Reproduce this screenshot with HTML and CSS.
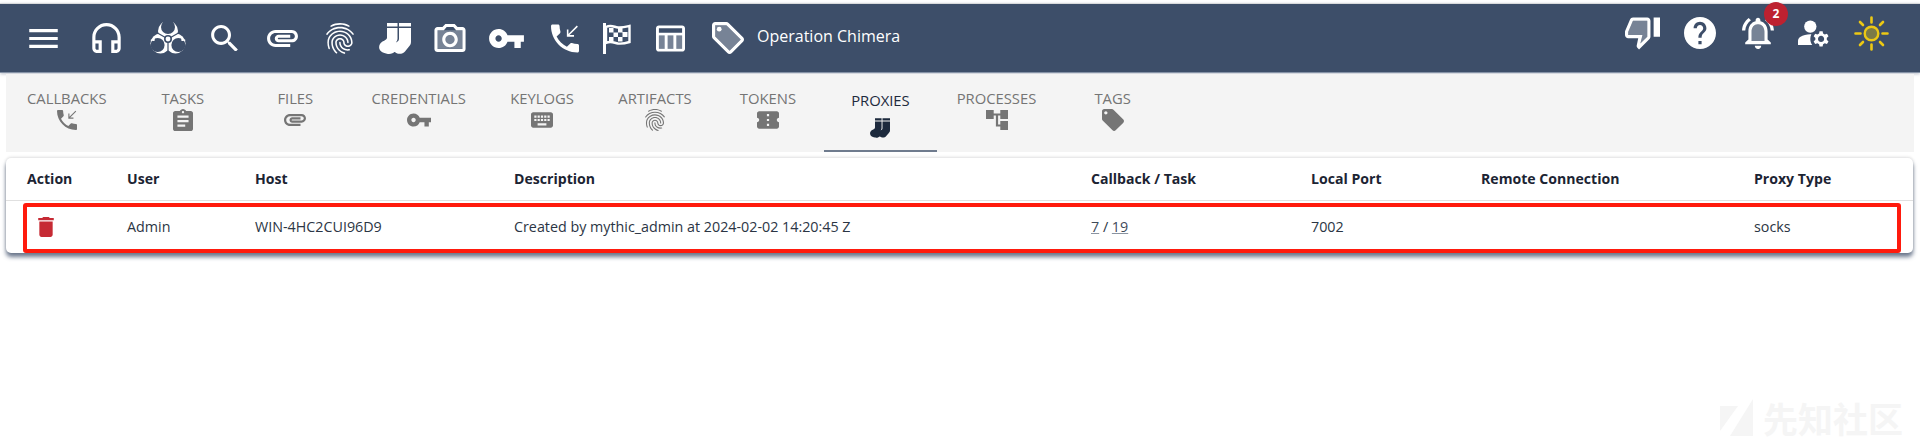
FILE: index.html
```html
<!DOCTYPE html>
<html lang="en">
<head>
<meta charset="utf-8">
<title>Operation Chimera - Proxies</title>
<link rel="stylesheet" href="styles.css">
</head>
<body>
<svg class="defs" width="0" height="0" aria-hidden="true">
  <defs>
    <symbol id="i-phone" viewBox="3 3 18 18"><path d="M20 15.5c-1.25 0-2.45-.2-3.57-.57-.35-.11-.74-.03-1.02.24l-2.2 2.2c-2.83-1.44-5.15-3.75-6.59-6.59l2.2-2.21c.28-.26.36-.65.25-1C8.7 6.45 8.5 5.25 8.5 4c0-.55-.45-1-1-1H4c-.55 0-1 .45-1 1 0 9.39 7.61 17 17 17 .55 0 1-.45 1-1v-3.5c0-.55-.45-1-1-1zM20.3 4.4l-.7-.7-5.4 5.4V6.2h-1v4.6h4.6v-1h-2.9z"/></symbol>
    <symbol id="i-clip" viewBox="2 7 20 11"><path d="M2 12.5C2 9.46 4.46 7 7.5 7H18c2.21 0 4 1.79 4 4s-1.79 4-4 4H9.5C8.12 15 7 13.88 7 12.5S8.12 10 9.5 10H17v2H9.41c-.55 0-.55 1 0 1H18c1.1 0 2-.9 2-2s-.9-2-2-2H7.5C5.57 9 4 10.57 4 12.5S5.57 16 7.5 16H17v2H7.5C4.46 18 2 15.54 2 12.5z"/></symbol>
    <symbol id="i-key" viewBox="1 6 22 12"><path d="M12.65 10C11.83 7.67 9.61 6 7 6c-3.31 0-6 2.69-6 6s2.69 6 6 6c2.61 0 4.83-1.67 5.65-4H17v4h4v-4h2v-4H12.65zM7 14c-1.1 0-2-.9-2-2s.9-2 2-2 2 .9 2 2-.9 2-2 2z"/></symbol>
    <symbol id="i-finger" viewBox="2.9 2 18.2 20"><path d="M17.81 4.47c-.08 0-.16-.02-.23-.06C15.66 3.42 14 3 12.01 3c-1.98 0-3.86.47-5.57 1.41-.24.13-.54.04-.68-.2-.13-.24-.04-.55.2-.68C7.82 2.52 9.86 2 12.01 2c2.13 0 3.99.47 6.03 1.52.25.13.34.43.21.67-.09.18-.26.28-.44.28zM3.5 9.72c-.1 0-.2-.03-.29-.09-.23-.16-.28-.47-.12-.7.99-1.4 2.25-2.5 3.75-3.27C9.98 4.04 14 4.03 17.15 5.65c1.5.77 2.76 1.86 3.75 3.25.16.22.11.54-.12.7-.23.16-.54.11-.7-.12-.9-1.26-2.04-2.25-3.39-2.94-2.87-1.47-6.54-1.47-9.4.01-1.36.7-2.5 1.7-3.4 2.96-.08.14-.23.21-.39.21zm6.25 12.07c-.13 0-.26-.05-.35-.15-.87-.87-1.34-1.43-2.01-2.64-.69-1.23-1.05-2.73-1.05-4.34 0-2.97 2.54-5.39 5.66-5.39s5.66 2.42 5.66 5.39c0 .28-.22.5-.5.5s-.5-.22-.5-.5c0-2.42-2.09-4.39-4.66-4.39-2.57 0-4.66 1.97-4.66 4.39 0 1.44.32 2.77.93 3.85.64 1.15 1.08 1.64 1.85 2.42.19.2.19.51 0 .71-.11.1-.24.15-.37.15zm7.17-1.85c-1.19 0-2.24-.3-3.1-.89-1.49-1.01-2.38-2.65-2.38-4.39 0-.28.22-.5.5-.5s.5.22.5.5c0 1.41.72 2.74 1.94 3.56.71.48 1.54.71 2.54.71.24 0 .64-.03 1.04-.1.27-.05.53.13.58.41.05.27-.13.53-.41.58-.57.11-1.07.12-1.21.12zM14.91 22c-.04 0-.09-.01-.13-.02-1.59-.44-2.63-1.03-3.72-2.1-1.4-1.39-2.17-3.24-2.17-5.22 0-1.62 1.38-2.94 3.08-2.94 1.7 0 3.08 1.32 3.08 2.94 0 1.07.93 1.94 2.08 1.94s2.08-.87 2.08-1.94c0-3.77-3.25-6.83-7.25-6.83-2.84 0-5.44 1.58-6.61 4.03-.39.81-.59 1.76-.59 2.8 0 .78.07 2.01.67 3.61.1.26-.03.55-.29.64-.26.1-.55-.04-.64-.29-.49-1.31-.73-2.61-.73-3.96 0-1.2.23-2.29.68-3.24 1.33-2.79 4.28-4.6 7.51-4.6 4.55 0 8.25 3.51 8.25 7.83 0 1.62-1.38 2.94-3.08 2.94s-3.08-1.32-3.08-2.94c0-1.07-.93-1.94-2.08-1.94s-2.08.87-2.08 1.94c0 1.71.66 3.31 1.87 4.51.95.94 1.86 1.46 3.27 1.85.27.07.42.35.35.61-.05.23-.26.38-.47.38z"/></symbol>
    <symbol id="i-socks" viewBox="0 0 32 31"><path d="M8 0h10.500v3.500H8zM20 0h12v3.500H20zM8 5h10.500v11c-.3 2-1.700 3.500-2.800 5.500-1.100 2.200-1.200 5 .3 7-1.700 1.800-4.800 3-8.100 2.200C3 30 .5 27.500.2 25c-.4-2.800 1-4.800 3-6.200 2-1.300 4.800-2 4.800-4.300zM20 5h12v14c0 2-1 3.500-2.200 4.800l-3.800 4.600c-1.800 2.200-5 3.100-7.800 2-2.800-1-4.500-3.600-4.100-6.400.3-2.500 2-4 4-5.200 1.400-.8 1.900-1.700 1.900-3.300z"/></symbol>
    <symbol id="i-tag" viewBox="2 2 20 20"><path d="M21.41 11.58l-9-9C12.05 2.220 11.550 2 11 2H4c-1.100 0-2 .9-2 2v7c0 .55.22 1.050.59 1.420l9 9c.36.36.86.58 1.41.58.55 0 1.050-.22 1.410-.59l7-7c.37-.36.59-.86.59-1.410 0-.55-.23-1.060-.59-1.420zM5.500 7C4.670 7 4 6.330 4 5.500S4.670 4 5.500 4 7 4.670 7 5.500 6.330 7 5.500 7z"/></symbol>
  </defs>
</svg>

<header class="appbar">
  <nav class="appbar-left">
    <svg class="ico" width="29" height="19" viewBox="3 6 18 12"><path d="M3 18h18v-2H3v2zm0-5h18v-2H3v2zm0-7v2h18V6H3z"/></svg>
    <svg class="ico" width="29" height="30" viewBox="3 1 18 19"><path d="M12 1c-4.970 0-9 4.030-9 9v7c0 1.660 1.340 3 3 3h3v-8H5v-2c0-3.870 3.130-7 7-7s7 3.130 7 7v2h-4v8h3c1.660 0 3-1.340 3-3v-7c0-4.970-4.030-9-9-9zM7 14v4H6c-.55 0-1-.45-1-1v-3h2zm12 3c0 .55-.45 1-1 1h-1v-4h2v3z"/></svg>
    <svg class="ico" width="36" height="32" viewBox="0 0 36 32">
      <mask id="bio-cut">
        <rect width="36" height="32" fill="#fff"/>
        <circle cx="18" cy="5" r="7" fill="#000"/>
        <circle cx="7.600" cy="23" r="7" fill="#000"/>
        <circle cx="28.400" cy="23" r="7" fill="#000"/>
        <circle cx="18" cy="17" r="4" fill="#000"/>
        <path class="bio-gap" d="M18 17v15M18 17L4 9M18 17l14-8"/>
      </mask>
      <g mask="url(#bio-cut)"><circle cx="18" cy="9" r="10"/><circle cx="10.500" cy="21.500" r="10"/><circle cx="25.500" cy="21.500" r="10"/></g>
      <path d="M0 18c2-.2 3.500-1.200 5-2.500l-.5 3.500C3 19.200 1.500 18.900 0 18zM36 18c-2-.2-3.500-1.200-5-2.500l.5 3.500c1.500.2 3-.1 4.500-1z"/>
      <circle cx="18" cy="17" r="2.400"/>
    </svg>
    <svg class="ico" width="27" height="26" viewBox="3 3 17.500 17"><path d="M15.500 14h-.79l-.28-.27C15.410 12.590 16 11.110 16 9.500 16 5.910 13.090 3 9.500 3S3 5.910 3 9.500 5.910 16 9.500 16c1.610 0 3.090-.59 4.230-1.570l.27.28v.79l5 4.990L20.490 19l-4.990-5zm-6 0C7.010 14 5 11.990 5 9.500S7.010 5 9.500 5 14 7.010 14 9.500 11.990 14 9.500 14z"/></svg>
    <svg class="ico" width="31" height="17"><use href="#i-clip"/></svg>
    <svg class="ico" width="28" height="31"><use href="#i-finger"/></svg>
    <svg class="ico" width="32" height="31"><use href="#i-socks"/></svg>
    <svg class="ico" width="32" height="28" viewBox="2 2 20 18"><path class="tone" d="M4 6h16v12H4z"/><path d="M20 4h-3.170L15 2H9L7.170 4H4c-1.100 0-2 .9-2 2v12c0 1.100.9 2 2 2h16c1.100 0 2-.9 2-2V6c0-1.100-.9-2-2-2zm0 14H4V6h4.050l1.830-2h4.240l1.830 2H20v12zM12 7c-2.760 0-5 2.240-5 5s2.240 5 5 5 5-2.240 5-5-2.240-5-5-5zm0 8c-1.650 0-3-1.350-3-3s1.350-3 3-3 3 1.350 3 3-1.350 3-3 3z"/></svg>
    <svg class="ico" width="35" height="19"><use href="#i-key"/></svg>
    <svg class="ico" width="28" height="29"><use href="#i-phone"/></svg>
    <svg class="ico" width="28" height="31" viewBox="0 0 28 31"><path d="M0 0h3v31H0z"/><path class="flag-line" d="M3 4c5-2.500 8 0 12 .5 4 .4 7-.4 11.500-1.500v16c-4.500 1.400-7.500 2-11.500 1.500-4-.6-7-3-12-.5z"/><path d="M6 5h4.500v4.500H6zM15 5h4.500v4.500H15zM10.500 9.500H15V14h-4.500zM19.500 9h5v5h-5zM6 14h4.500v4.500H6zM15 14h4.500v4.500H15z"/></svg>
    <svg class="ico" width="29" height="29" viewBox="2 3 20 18"><path class="tone" d="M4 10h16v9H4z"/><path d="M20 3H4c-1.100 0-2 .9-2 2v14c0 1.100.9 2 2 2h16c1.100 0 2-.9 2-2V5c0-1.100-.9-2-2-2zm0 2v3H4V5h16zm-10 14v-9h4v9h-4zM4 10h4v9H4v-9zm12 9v-9h4v9h-4z"/></svg>
    <svg class="ico" width="32" height="32" viewBox="2 2 20 20"><path class="tone" d="M4 4h7l9 9-7 7-9-9z"/><path d="M21.410 11.580l-9-9C12.050 2.220 11.550 2 11 2H4c-1.100 0-2 .9-2 2v7c0 .55.22 1.050.59 1.420l9 9c.36.36.86.58 1.410.58s1.050-.22 1.410-.59l7-7c.37-.36.59-.86.59-1.410s-.23-1.060-.59-1.420zM13 20.010L4 11V4h7v-.01l9 9-7 7.020z"/><circle cx="6.500" cy="6.500" r="1.500"/></svg>
    <span class="op-name">Operation Chimera</span>
  </nav>
  <div class="appbar-right">
    <svg class="ico" width="35" height="33" viewBox="1 3 22 20"><path class="tone" d="M6 5h9v10l-4.300 4.300L12 14H3v-2z"/><path d="M15 3H6c-.83 0-1.540.5-1.840 1.220l-3.020 7.050c-.09.23-.14.47-.14.73v2c0 1.100.9 2 2 2h6.310l-.95 4.570-.03.32c0 .41.17.79.44 1.060L9.830 23l6.590-6.590c.36-.36.58-.86.58-1.410V5c0-1.100-.9-2-2-2zm0 12l-4.340 4.340L12 14H3v-2l3-7h9v10zm4-12h4v12h-4z"/></svg>
    <svg class="ico" width="32" height="32" viewBox="2 2 20 20"><path d="M12 2C6.480 2 2 6.480 2 12s4.480 10 10 10 10-4.480 10-10S17.520 2 12 2zm1 17h-2v-2h2v2zm2.070-7.750l-.9.92C13.450 12.900 13 13.500 13 15h-2v-.5c0-1.100.45-2.100 1.170-2.830l1.240-1.260c.37-.36.59-.86.59-1.410 0-1.100-.9-2-2-2s-2 .9-2 2H8c0-2.210 1.790-4 4-4s4 1.790 4 4c0 .88-.36 1.680-.93 2.250z"/></svg>
    <div class="bell">
      <svg class="ico" width="32" height="32" viewBox="2 2 20 20"><path class="tone" d="M8 11c0-2.500 1.500-4.500 4-4.500s4 2 4 4.500v6H8z"/><path d="M7.580 4.080 6.150 2.650C3.750 4.480 2.170 7.300 2.030 10.500h2c.15-2.650 1.510-4.970 3.550-6.420zm12.390 6.420h2c-.15-3.200-1.730-6.020-4.120-7.850l-1.420 1.430c2.020 1.450 3.390 3.770 3.540 6.420zM18 11c0-3.070-1.640-5.640-4.500-6.320V4c0-.83-.67-1.500-1.500-1.500s-1.500.67-1.500 1.500v.68C7.630 5.360 6 7.920 6 11v5l-2 2v1h16v-1l-2-2v-5zm-2 6H8v-6c0-2.480 1.510-4.500 4-4.500s4 2.020 4 4.500v6zm-4 5c.14 0 .27-.01.4-.04.65-.14 1.180-.58 1.440-1.180.1-.24.15-.5.15-.78h-4c.01 1.100.9 2 2.010 2z"/></svg>
      <span class="badge">2</span>
    </div>
    <svg class="ico" width="32" height="27" viewBox="2 4 20.800 17"><circle cx="10" cy="8" r="4"/><path d="M10.670 13.020c-.22-.01-.44-.02-.67-.02-2.420 0-4.680.67-6.610 1.820-.88.52-1.390 1.500-1.390 2.530V20h9.260c-.79-1.130-1.260-2.510-1.260-4 0-1.070.25-2.070.67-2.980zM20.750 16c0-.22-.03-.42-.06-.63l1.140-1.010-1-1.730-1.450.49c-.32-.27-.68-.48-1.080-.63L18 11h-2l-.3 1.490c-.4.15-.76.36-1.080.63l-1.450-.49-1 1.730 1.140 1.010c-.03.21-.06.41-.06.63s.03.42.06.63l-1.140 1.010 1 1.730 1.450-.49c.32.27.68.48 1.080.63L16 21h2l.3-1.490c.4-.15.76-.36 1.080-.63l1.450.49 1-1.730-1.140-1.010c.03-.21.06-.41.06-.63zM17 18c-1.100 0-2-.9-2-2s.9-2 2-2 2 .9 2 2-.9 2-2 2z"/></svg>
    <svg class="sun" width="35" height="35" viewBox="0 0 35 35"><circle class="sun-core" cx="17.500" cy="17.500" r="6.800"/><path class="sun-rays" d="M17.500 1.500v5M17.500 28.500v5M1.500 17.500h5M28.500 17.500h5M6 6l3 3M26 26l3 3M6 29l3-3M26 9l3-3"/></svg>
  </div>
</header>

<div class="tabs">
  <div class="tab"><span>CALLBACKS</span><svg class="tab-ico" width="20" height="24"><use href="#i-phone"/></svg></div>
  <div class="tab"><span>TASKS</span><svg class="tab-ico" width="20" height="24" viewBox="3 1 18 20"><path d="M19 3h-4.180C14.400 1.840 13.300 1 12 1c-1.300 0-2.400.84-2.820 2H5c-1.100 0-2 .9-2 2v14c0 1.100.9 2 2 2h14c1.100 0 2-.9 2-2V5c0-1.100-.9-2-2-2zm-7 0c.55 0 1 .45 1 1s-.45 1-1 1-1-.45-1-1 .45-1 1-1zm2 14H7v-2h7v2zm3-4H7v-2h10v2zm0-4H7V7h10v2z"/></svg></div>
  <div class="tab"><span>FILES</span><svg class="tab-ico" width="22" height="24"><use href="#i-clip"/></svg></div>
  <div class="tab"><span>CREDENTIALS</span><svg class="tab-ico" width="24" height="24"><use href="#i-key"/></svg></div>
  <div class="tab"><span>KEYLOGS</span><svg class="tab-ico" width="22" height="24" viewBox="2 5 20 14"><path d="M20 5H4c-1.100 0-1.990.9-1.990 2L2 17c0 1.100.9 2 2 2h16c1.100 0 2-.9 2-2V7c0-1.100-.9-2-2-2zm-9 3h2v2h-2V8zm0 3h2v2h-2v-2zM8 8h2v2H8V8zm0 3h2v2H8v-2zm-1 2H5v-2h2v2zm0-3H5V8h2v2zm9 7H8v-2h8v2zm0-4h-2v-2h2v2zm0-3h-2V8h2v2zm3 3h-2v-2h2v2zm0-3h-2V8h2v2z"/></svg></div>
  <div class="tab"><span>ARTIFACTS</span><svg class="tab-ico" width="20" height="24"><use href="#i-finger"/></svg></div>
  <div class="tab"><span>TOKENS</span><svg class="tab-ico" width="22" height="24" viewBox="2 4 20 16"><path d="M22 10V6c0-1.110-.9-2-2-2H4c-1.100 0-1.990.89-1.990 2v4c1.100 0 1.990.9 1.990 2s-.89 2-2 2v4c0 1.100.9 2 2 2h16c1.100 0 2-.9 2-2v-4c-1.100 0-2-.9-2-2s.9-2 2-2zm-9 7.500h-2v-2h2v2zm0-4.500h-2v-2h2v2zm0-4.500h-2v-2h2v2z"/></svg></div>
  <div class="tab tab-active"><span>PROXIES</span><svg class="tab-ico" width="20" height="24"><use href="#i-socks"/></svg></div>
  <div class="tab"><span>PROCESSES</span><svg class="tab-ico" width="22" height="24" viewBox="2 3 20 18"><path d="M22 11V3h-7v3H9V3H2v8h7V8h2v10h4v3h7v-8h-7v3h-2V8h2v3z"/></svg></div>
  <div class="tab"><span>TAGS</span><svg class="tab-ico" width="22" height="24"><use href="#i-tag"/></svg></div>
</div>

<section class="card">
  <table class="grid">
    <colgroup>
      <col class="c-action"><col class="c-user"><col class="c-host"><col class="c-desc"><col class="c-cb"><col class="c-port"><col class="c-remote"><col class="c-type">
    </colgroup>
    <thead>
      <tr><th>Action</th><th>User</th><th>Host</th><th>Description</th><th>Callback / Task</th><th>Local Port</th><th>Remote Connection</th><th>Proxy Type</th></tr>
    </thead>
    <tbody>
      <tr>
        <td><svg class="trash" width="16" height="20" viewBox="5 3 14 18"><path d="M6 19c0 1.100.9 2 2 2h8c1.100 0 2-.9 2-2V7H6v12zM19 4h-3.500l-1-1h-5l-1 1H5v2h14V4z"/></svg></td>
        <td>Admin</td>
        <td>WIN-4HC2CUI96D9</td>
        <td>Created by mythic_admin at 2024-02-02 14:20:45 Z</td>
        <td><a class="ref" href="#">7</a> / <a class="ref" href="#">19</a></td>
        <td>7002</td>
        <td></td>
        <td>socks</td>
      </tr>
    </tbody>
  </table>
  <div class="highlight"></div>
</section>

<div class="watermark">
  <svg width="34" height="38" viewBox="0 0 34 38"><path d="M0 7h18L0 32zM33 0v37H10z"/></svg>
  <span>先知社区</span>
</div>
</body>
</html>
```

FILE: styles.css
```css
* { box-sizing: border-box; }

html, body { height: 100%; }

body {
  margin: 0;
  padding-top: 3px;
  background: #fff;
  color: #2b3544;
  font-family: "Open Sans", "Noto Sans", "Liberation Sans", sans-serif;
  overflow: hidden;
  position: relative;
}

.defs { position: absolute; }

.appbar {
  height: 70px;
  display: flex;
  justify-content: space-between;
  background: #3d4e69;
  border-top: 1px solid #d9dadc;
  border-bottom: 1px solid #8592a6;
  box-shadow: 0 1px 3px rgba(61, 78, 105, .35);
  color: #fff;
}

.appbar-left {
  display: grid;
  grid-template-columns: 63px 58px 61px 56px 59px 53px 55px 55px 62px 52px 53px 56px 45px auto;
  align-items: center;
  padding-left: 29px;
}

.ico { fill: #fff; display: block; }
.tone { fill: rgba(255, 255, 255, .3); }
.flag-line { fill: none; stroke: #fff; stroke-width: 2.4; }
.bio-gap { fill: none; stroke: #000; stroke-width: 1.2; }

.op-name {
  font-size: 16px;
  padding-bottom: 4px;
}

.appbar-right {
  display: flex;
  align-items: center;
  gap: 24px;
  padding: 0 31px 10px 0;
}

.bell { position: relative; margin-left: 2px; }

.badge {
  position: absolute;
  top: -15px;
  left: 22px;
  width: 24px;
  height: 24px;
  border-radius: 50%;
  background: #bd2130;
  color: #fff;
  font-size: 12px;
  font-weight: 700;
  line-height: 24px;
  text-align: center;
}

.sun-core { fill: rgba(255, 214, 0, .32); stroke: #ecc814; stroke-width: 2.4; }
.sun-rays { fill: none; stroke: #ecc814; stroke-width: 2.6; stroke-linecap: round; }

.tabs {
  height: 78px;
  margin: 1px 6px 0;
  background: #f4f4f4;
  display: flex;
  padding-left: 1px;
}

.tab {
  position: relative;
  min-width: 112.5px;
  padding: 14px 20px 0;
  display: flex;
  flex-direction: column;
  align-items: center;
  color: #757575;
  font-size: 14.8px;
  line-height: 20px;
}

.tab-ico {
  fill: currentColor;
}

.tab-active { color: #1d2a3d; padding-top: 16px; }
.tab-active .tab-ico { margin-top: 6px; }
.tab-active::after {
  content: "";
  position: absolute;
  left: 0;
  right: 0;
  bottom: 0;
  height: 2px;
  background: #6f7b8e;
}

.card {
  position: relative;
  margin: 6px 7px 0 6px;
  background: #fff;
  border-radius: 5px;
  box-shadow: 0 -1px 3px rgba(0, 0, 0, .12), 0 4px 4px rgba(61, 78, 105, .75);
}

.grid {
  width: 100%;
  border-collapse: collapse;
  table-layout: fixed;
  font-size: 14.3px;
}

.c-action { width: 100px; }
.c-user { width: 128px; }
.c-host { width: 259px; }
.c-desc { width: 577px; }
.c-cb { width: 220px; }
.c-port { width: 170px; }
.c-remote { width: 273px; }
.c-type { width: 180px; }

.grid th, .grid td {
  padding: 0 0 0 21px;
  text-align: left;
}

.grid th {
  height: 42px;
  color: #1c2433;
  font-size: 14.1px;
  font-weight: 700;
  border-bottom: 1px solid #e0e0e0;
}

.grid td { height: 53px; }

.ref { color: #3f4a5a; text-decoration: underline; text-decoration-color: #8a93a0; }

.trash { fill: #c62a34; display: block; margin-left: 11px; }

.highlight {
  position: absolute;
  left: 17px;
  top: 45px;
  width: 1878px;
  height: 50px;
  border: 4px solid #ff1a0d;
  border-radius: 3px;
  pointer-events: none;
}

.watermark {
  position: absolute;
  left: 1720px;
  top: 399px;
  display: flex;
  align-items: center;
  gap: 9px;
  color: #f5f5f5;
  fill: #f5f5f5;
  font-family: "Noto Sans CJK SC", sans-serif;
  font-size: 35px;
  font-weight: 700;
  line-height: 38px;
}
```
